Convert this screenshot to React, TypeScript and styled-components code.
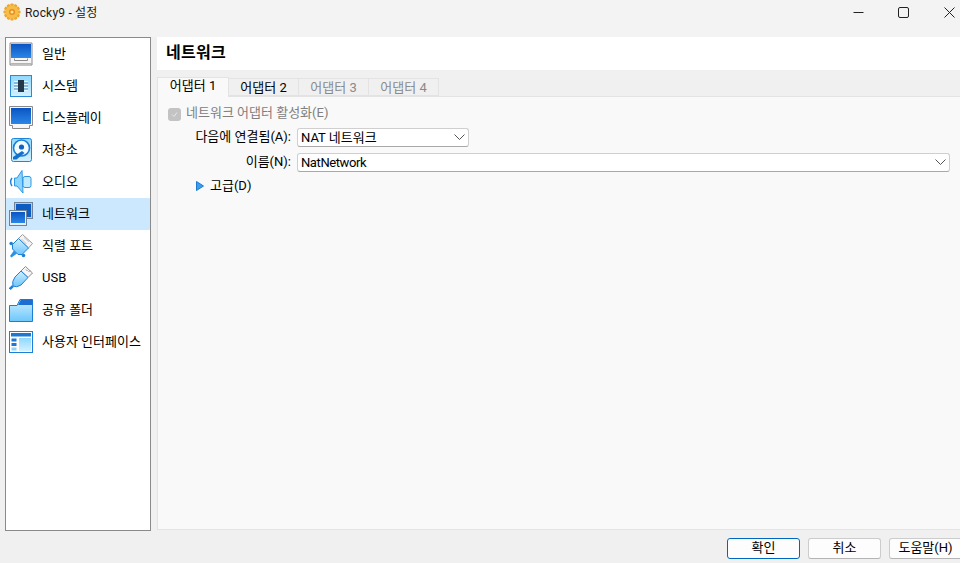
import React from "react";
import styled, { createGlobalStyle } from "styled-components";

const Global = createGlobalStyle`
  html, body {
    margin: 0;
    padding: 0;
    background: #f0f0f0;
  }
  * {
    box-sizing: border-box;
  }
`;

const FONT = `Roboto, "Noto Sans CJK KR", "Noto Sans", sans-serif`;

const Window = styled.div`
  width: 960px;
  height: 563px;
  overflow: hidden;
  display: flex;
  flex-direction: column;
  background: #f0f0f0;
  font-family: ${FONT};
  font-size: 13px;
  color: #000;
`;

const TitleBar = styled.div`
  height: 37px;
  flex: none;
  display: flex;
  align-items: flex-start;
  background: #f3f3f3;
`;

const TitleIcon = styled.svg`
  width: 18px;
  height: 18px;
  margin: 3px 0 0 3px;
  flex: none;
`;

const TitleText = styled.div`
  margin: 4px 0 0 4px;
  line-height: 18px;
  font-size: 12px;
  letter-spacing: 0.2px;
  color: #1a1a1a;
  flex: 1;
`;

const WinButtons = styled.div`
  display: flex;
  margin-right: -12px;
`;

const WinButton = styled.div`
  width: 45.5px;
  height: 25px;
  display: flex;
  align-items: center;
  justify-content: center;
`;

const Defs = styled.svg`
  position: absolute;
  width: 0;
  height: 0;
`;

const Main = styled.div`
  height: 494px;
  flex: none;
  display: flex;
  padding-left: 5px;
`;

const Sidebar = styled.div`
  width: 146px;
  height: 494px;
  flex: none;
  background: #fff;
  border: 1px solid #8a8a8a;
  display: flex;
  flex-direction: column;
`;

const NavItem = styled.div<{ $active?: boolean }>`
  height: 32px;
  flex: none;
  display: flex;
  align-items: center;
  padding-left: 3px;
  background: ${(p) => (p.$active ? "#cce8ff" : "transparent")};
  border-radius: 1px;
`;

const NavIcon = styled.svg`
  width: 24px;
  height: 24px;
  flex: none;
`;

const NavLabel = styled.span`
  margin-left: 9px;
  line-height: 18px;
  white-space: nowrap;
`;

const Content = styled.div`
  margin-left: 6px;
  width: 803px;
  display: flex;
  flex-direction: column;
`;

const Header = styled.div`
  height: 33px;
  flex: none;
  background: #fff;
  padding-left: 9px;
  font-size: 16px;
  font-weight: 700;
  letter-spacing: 0.3px;
  line-height: 32px;
`;

const TabBar = styled.div`
  height: 20px;
  margin-top: 6px;
  flex: none;
  display: flex;
  align-items: flex-end;
  position: relative;
  z-index: 1;
`;

const Tab = styled.div<{ $active?: boolean; $disabled?: boolean }>`
  width: ${(p) => (p.$active ? "72px" : "70px")};
  height: ${(p) => (p.$active ? "20px" : "18px")};
  margin-bottom: ${(p) => (p.$active ? "-1px" : "0")};
  text-align: center;
  line-height: ${(p) => (p.$active ? "16px" : "17px")};
  color: ${(p) => (p.$disabled ? "#8a8a8a" : "#000")};
  background: ${(p) => (p.$active ? "#f9f9f9" : "#f0f0f0")};
  border: 1px solid #e3e3e3;
  border-bottom: ${(p) => (p.$active ? "none" : "1px solid #e3e3e3")};
  border-left: ${(p) => (p.$active ? "1px solid #e3e3e3" : "none")};
`;

const Panel = styled.div`
  height: 434px;
  flex: none;
  background: #f9f9f9;
  border: 1px solid #e3e3e3;
  border-right: none;
  display: flex;
  flex-direction: column;
  padding-top: 9px;
`;

const CheckRow = styled.div`
  display: flex;
  align-items: center;
  height: 16px;
  padding-left: 10px;
  color: #808080;
`;

const CheckBox = styled.div`
  width: 13px;
  height: 13px;
  border-radius: 3px;
  background: #c3c3c3;
  display: flex;
  align-items: center;
  justify-content: center;
`;

const CheckLabel = styled.span`
  margin: 0 0 2px 5px;
  line-height: 16px;
`;

const FormRow = styled.div<{ $top: number }>`
  display: flex;
  align-items: center;
  height: 20px;
  margin-top: ${(p) => p.$top}px;
`;

const FieldLabel = styled.div`
  width: 133px;
  flex: none;
  text-align: right;
  line-height: 18px;
  white-space: nowrap;
`;

const Select = styled.div<{ $width: number; $tracking?: number }>`
  margin-left: 6px;
  width: ${(p) => p.$width}px;
  height: 19px;
  flex: none;
  background: #fff;
  border: 1px solid #cfcfcf;
  border-bottom-color: #a8a8a8;
  border-radius: 3px;
  display: flex;
  align-items: center;
  justify-content: space-between;
  padding: 0 3px 0 3px;
  line-height: 17px;
  letter-spacing: ${(p) => p.$tracking ?? 0}px;
`;

const Advanced = styled.div`
  display: flex;
  align-items: center;
  height: 18px;
  margin-top: 5px;
  padding-left: 38px;
`;

const AdvancedLabel = styled.span`
  margin-left: 6px;
  line-height: 18px;
`;

const Footer = styled.div`
  flex: 1;
  display: flex;
  justify-content: flex-end;
  align-items: flex-start;
  gap: 8px;
  padding-top: 8px;
  margin-right: -2px;
`;

const Button = styled.div<{ $primary?: boolean }>`
  width: 73px;
  height: 21px;
  background: #fdfdfd;
  border: 1px solid ${(p) => (p.$primary ? "#0067c0" : "#cccccc")};
  border-bottom-color: ${(p) => (p.$primary ? "#0067c0" : "#b4b4b4")};
  border-radius: 3px;
  text-align: center;
  line-height: 18px;
`;

const Chevron = () => (
  <svg width="11" height="6" viewBox="0 0 11 6">
    <path d="M0.5 0.5 L5.5 5.5 L10.5 0.5" fill="none" stroke="#555" strokeWidth="1" />
  </svg>
);

const Gear = () => (
  <TitleIcon viewBox="0 0 18 18">
    <g fill="#eea62c">
      {[0, 30, 60, 90, 120, 150].map((a) => (
        <rect key={a} x="7.4" y="0.5" width="3.2" height="17" rx="0.8" transform={`rotate(${a} 9 9)`} />
      ))}
    </g>
    <circle cx="9" cy="9" r="6.4" fill="#f6bc45" />
    <circle cx="9" cy="9" r="3" fill="#e58e22" />
    <circle cx="9" cy="9" r="1.5" fill="#fbe39a" />
  </TitleIcon>
);

const GeneralIcon = () => (
  <NavIcon viewBox="0 0 24 24">
    <path d="M1 1H23V23H1Z" fill="#f6f6f6" stroke="#8a8a8a" />
    <rect x="2" y="2" width="20" height="14" fill="url(#screen)" />
    <path d="M5.5 16.5V18.5H18.5V16.5" fill="none" stroke="#8a8a8a" />
    <path d="M1 21.5H23" stroke="#b5b5b5" />
  </NavIcon>
);

const SystemIcon = () => (
  <NavIcon viewBox="0 0 24 24">
    <rect x="1.5" y="1.5" width="21" height="21" fill="url(#light)" stroke="#2a8ad8" />
    <rect x="5" y="7" width="14" height="10" fill="#e6f7ff" />
    <rect x="9" y="6" width="6" height="12" fill="#25384a" />
    <path d="M5 9H9M5 12H9M5 15H9M15 9H19M15 12H19M15 15H19" stroke="#2a78c0" />
  </NavIcon>
);

const DisplayIcon = () => (
  <NavIcon viewBox="0 0 24 24">
    <path d="M0.5 0.5H23.5V19.5H20.5V22.5H3.5V19.5H0.5Z" fill="#f6f6f6" stroke="#8a8a8a" />
    <rect x="2" y="2" width="20" height="16" fill="url(#screen)" />
  </NavIcon>
);

const StorageIcon = () => (
  <NavIcon viewBox="0 0 24 24">
    <rect x="2.5" y="0.5" width="20" height="23" rx="2" fill="url(#light)" stroke="#1e84dc" />
    <circle cx="12.5" cy="10" r="8" fill="#f0faff" stroke="#1e7ed6" strokeWidth="1.6" />
    <circle cx="12.5" cy="9" r="2.6" fill="#0f63c4" />
    <path d="M4 19 L13 13 L15.5 15 L7.5 21.5 H4Z" fill="#1270cc" />
  </NavIcon>
);

const AudioIcon = () => (
  <NavIcon viewBox="0 0 24 24">
    <path d="M13 0.5 L14 23 L8 16 H5.5 V8 H8Z" fill="#8ad6ff" stroke="#2f97e4" />
    <rect x="14" y="6.5" width="8" height="11" rx="2" fill="#bfeaff" stroke="#2f97e4" />
    <path d="M3 8 Q0.2 12 3 16" fill="none" stroke="#1f80d8" strokeWidth="1.4" />
  </NavIcon>
);

const NetworkIcon = () => (
  <NavIcon viewBox="0 0 24 24">
    <rect x="5.5" y="0.5" width="18" height="16" fill="#b9cbdc" stroke="#6f8296" />
    <rect x="7" y="2" width="15" height="13" fill="#0e5bc2" />
    <rect x="0.5" y="8.5" width="17" height="15" fill="#e6edf4" stroke="#6f8296" />
    <rect x="2" y="10" width="14" height="11" fill="url(#screen)" />
  </NavIcon>
);

const SerialIcon = () => (
  <NavIcon viewBox="0 0 24 24">
    <path d="M13.5 0.5 L23.5 9.5 L19.5 14 L9.5 4.5Z" fill="#f4f4f4" stroke="#9a9a9a" />
    <path d="M15 3.5L20 8M12.5 5L17.5 10" stroke="#c8c8c8" />
    <path d="M9.5 4.5 L19.5 14 L13 20.5 H9 L3.5 15 V10.5Z" fill="url(#folder)" stroke="#1f80d8" />
    <path d="M5 16.5 L1 22 L2.5 23.5 L8 19.5Z" fill="#2a92e4" />
    <circle cx="2.2" cy="9.5" r="1.8" fill="#1f80d8" />
    <circle cx="14.5" cy="21.5" r="1.8" fill="#1f80d8" />
  </NavIcon>
);

const UsbIcon = () => (
  <NavIcon viewBox="0 0 24 24">
    <path d="M16.5 0.5 L23.5 7 L19 11.5 L12 5Z" fill="#f6f6f6" stroke="#8a8a8a" />
    <path d="M17 3.5L18.5 5M19.5 6L21 4.5" stroke="#8a8a8a" />
    <path d="M12 5 L19 11.5 L12 19 Q7.5 22 4 20 Q2.5 15.5 6 11Z" fill="url(#folder)" stroke="#1f80d8" />
    <path d="M4 20 L0.8 23" stroke="#1f80d8" strokeWidth="2.4" />
  </NavIcon>
);

const FolderIcon = () => (
  <NavIcon viewBox="0 0 24 24">
    <path d="M0.5 7.5 H8 L11 1.5 H23.5 V23.5 H0.5Z" fill="url(#folder)" stroke="#1c7ed6" />
    <path d="M9 7 L12 1.5 H23.5 V7Z" fill="#1c6fd0" />
  </NavIcon>
);

const InterfaceIcon = () => (
  <NavIcon viewBox="0 0 24 24">
    <rect x="0.5" y="1.5" width="23" height="21" fill="#fff" stroke="#1c80d8" />
    <rect x="2" y="3" width="20" height="3.5" fill="#1c78d2" />
    <rect x="10" y="8" width="12" height="13" fill="url(#light)" />
    <rect x="2.5" y="8.5" width="5" height="3" fill="#1c78d2" />
    <rect x="2.5" y="13" width="5" height="3" fill="#1c78d2" />
    <rect x="2.5" y="17.5" width="5" height="3" fill="#8fd2fa" />
  </NavIcon>
);

const items = [
  { label: "일반", Icon: GeneralIcon },
  { label: "시스템", Icon: SystemIcon },
  { label: "디스플레이", Icon: DisplayIcon },
  { label: "저장소", Icon: StorageIcon },
  { label: "오디오", Icon: AudioIcon },
  { label: "네트워크", Icon: NetworkIcon, active: true },
  { label: "직렬 포트", Icon: SerialIcon },
  { label: "USB", Icon: UsbIcon },
  { label: "공유 폴더", Icon: FolderIcon },
  { label: "사용자 인터페이스", Icon: InterfaceIcon },
];

const App = () => {
  return (
    <Window>
      <Global />
      <Defs>
        <defs>
          <linearGradient id="screen" x1="0" y1="0" x2="0" y2="1">
            <stop offset="0" stopColor="#0a55c4" />
            <stop offset="1" stopColor="#2b86e6" />
          </linearGradient>
          <linearGradient id="light" x1="0" y1="0" x2="0" y2="1">
            <stop offset="0" stopColor="#8fd8ff" />
            <stop offset="1" stopColor="#d3f1ff" />
          </linearGradient>
          <linearGradient id="folder" x1="0" y1="0" x2="0" y2="1">
            <stop offset="0" stopColor="#cfeeff" />
            <stop offset="1" stopColor="#6cc7fb" />
          </linearGradient>
        </defs>
      </Defs>
      <TitleBar>
        <Gear />
        <TitleText>Rocky9 - 설정</TitleText>
        <WinButtons>
          <WinButton>
            <svg width="11" height="11" viewBox="0 0 11 11">
              <path d="M0.5 5.5H10.5" stroke="#222" />
            </svg>
          </WinButton>
          <WinButton>
            <svg width="11" height="11" viewBox="0 0 11 11">
              <rect x="0.5" y="0.5" width="10" height="10" rx="1.5" fill="none" stroke="#222" />
            </svg>
          </WinButton>
          <WinButton>
            <svg width="11" height="11" viewBox="0 0 11 11">
              <path d="M0.5 0.5L10.5 10.5M10.5 0.5L0.5 10.5" stroke="#222" />
            </svg>
          </WinButton>
        </WinButtons>
      </TitleBar>
      <Main>
        <Sidebar>
          {items.map(({ label, Icon, active }) => (
            <NavItem key={label} $active={active}>
              <Icon />
              <NavLabel>{label}</NavLabel>
            </NavItem>
          ))}
        </Sidebar>
        <Content>
          <Header>네트워크</Header>
          <TabBar>
            <Tab $active>어댑터 1</Tab>
            <Tab>어댑터 2</Tab>
            <Tab $disabled>어댑터 3</Tab>
            <Tab $disabled>어댑터 4</Tab>
          </TabBar>
          <Panel>
            <CheckRow>
              <CheckBox>
                <svg width="9" height="9" viewBox="0 0 9 9">
                  <path d="M2 4.5L4 6.5L7 2.5" fill="none" stroke="#e8e8e8" />
                </svg>
              </CheckBox>
              <CheckLabel>네트워크 어댑터 활성화(E)</CheckLabel>
            </CheckRow>
            <FormRow $top={5}>
              <FieldLabel>다음에 연결됨(A):</FieldLabel>
              <Select $width={172}>
                NAT 네트워크
                <Chevron />
              </Select>
            </FormRow>
            <FormRow $top={5}>
              <FieldLabel>이름(N):</FieldLabel>
              <Select $width={653} $tracking={-0.4}>
                NatNetwork
                <Chevron />
              </Select>
            </FormRow>
            <Advanced>
              <svg width="8" height="10" viewBox="0 0 8 10">
                <path d="M0.5 0.5L7.5 5L0.5 9.5Z" fill="#3aa0ee" stroke="#1f78d0" />
              </svg>
              <AdvancedLabel>고급(D)</AdvancedLabel>
            </Advanced>
          </Panel>
          <Footer>
            <Button $primary>확인</Button>
            <Button>취소</Button>
            <Button>도움말(H)</Button>
          </Footer>
        </Content>
      </Main>
    </Window>
  );
};

export default App;
